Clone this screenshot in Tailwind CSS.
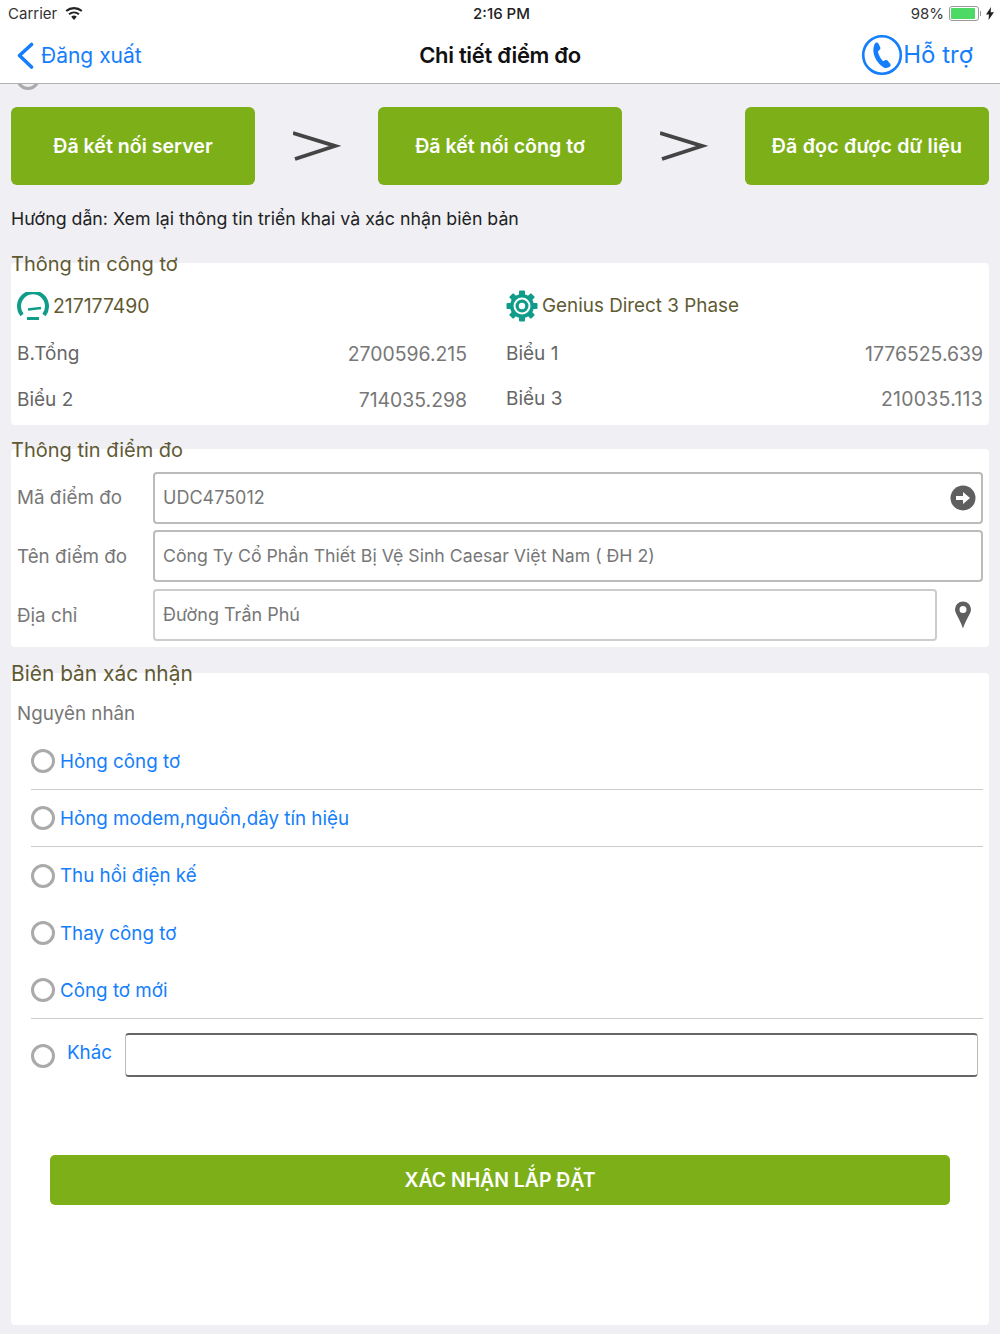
<!DOCTYPE html>
<html lang="vi"><head><meta charset="utf-8"><script src="https://cdn.jsdelivr.net/npm/@tailwindcss/browser@4"></script></head>
<body class="m-0">
<div class="relative w-[1000px] h-[1334px] overflow-hidden bg-[#efeff4] font-['Inter','Noto_Sans',sans-serif] text-[18px] leading-[24px]">
  <div class="absolute left-[16px] top-[66px] w-[24px] h-[24px] rounded-full border-[3px] border-[#aaaaaa]"></div>
  <header class="relative bg-white h-[84px] border-b border-[#b2b2b2]">
    <div class="h-[27px] flex items-center justify-between pl-[8px] pr-[6px] text-[15px] text-[#333]">
      <div class="flex items-center gap-[8px] w-[300px]"><span>Carrier</span>
        <svg width="18" height="13" viewBox="0 0 18 13" fill="#222"><path d="M9 13 6.200 9.700a4.300 4.300 0 0 1 5.600 0z"/><path d="M4.700 8A6.700 6.700 0 0 1 13.300 8l1.300-1.600A8.800 8.800 0 0 0 3.400 6.400z"/><path d="M1.900 4.800A11 11 0 0 1 16.100 4.800l1.400-1.600A13.200 13.200 0 0 0 .5 3.200z"/></svg>
      </div>
      <span class="font-medium text-[#222] ml-[1px]">2:16 PM</span>
      <div class="flex items-center justify-end gap-[5px] w-[300px]"><span>98%</span>
        <div class="flex items-center gap-[1px]"><div class="w-[30px] h-[15px] rounded-[3px] border border-[#999] p-[1px]"><div class="h-full w-[93%] rounded-[1px] bg-[#4cd964]"></div></div><div class="w-[1px] h-[5px] bg-[#999]"></div></div>
        <svg width="8" height="13" viewBox="0 0 8 13" fill="#222"><path d="M5 0 0 7.500h3L2.500 13 8 5.200H4.700z"/></svg>
      </div>
    </div>
    <nav class="h-[56px] flex items-center justify-between pl-[16px] pr-[27px]">
      <div class="flex items-center gap-[6px] w-[311px] text-[#147efb] text-[21px]">
        <svg width="19" height="27" viewBox="0 0 19 27" fill="none" stroke="#147efb" stroke-width="3.600" stroke-linecap="round" stroke-linejoin="round"><path d="M15.500 2.500 3.500 13.500 15.500 25"/></svg>
        <span class="mt-[2px]">Đăng xuất</span>
      </div>
      <div class="font-semibold text-[22px] text-[#111] tracking-[-0.3px]">Chi tiết điểm đo</div>
      <div class="flex items-center justify-end w-[300px] text-[#147efb] text-[24px]">
        <svg width="42" height="42" viewBox="0 0 42 42"><circle cx="21" cy="21" r="18.800" fill="none" stroke="#147efb" stroke-width="2.600"/><path fill="#147efb" d="M14.500 8.800c1-.7 2.300-.4 2.900.7l1.800 3.800c.4.900.2 1.800-.5 2.400l-1.400 1.200c-.3.300-.4.700-.3 1.100.7 3 2.300 6.200 4.700 8.700.3.300.7.400 1 .2l1.700-.8c.9-.4 1.800-.2 2.400.6l2.500 3.200c.6.900.5 2-.3 2.700-1.700 1.500-4.100 2-6.300.8-3.800-2-7-5.800-8.900-10.300-1.800-4.400-2-9.400-.2-13.200.2-.4.500-.7.900-1z"/></svg>
        <span>Hỗ trợ</span>
      </div>
    </nav>
  </header>

  <main class="px-[11px]">
    <section class="flex justify-between items-center pt-[23px]">
      <div class="w-[244px] h-[78px] rounded-[6px] bg-[#7daf19] flex items-center justify-center text-white font-semibold text-[19.600px]">Đã kết nối server</div>
      <svg width="48" height="36" viewBox="0 0 48 36" fill="none" stroke="#444" stroke-width="3.800"><path d="M0 5 42 18 2 31"/></svg>
      <div class="w-[244px] h-[78px] rounded-[6px] bg-[#7daf19] flex items-center justify-center text-white font-semibold text-[19.600px]">Đã kết nối công tơ</div>
      <svg width="48" height="36" viewBox="0 0 48 36" fill="none" stroke="#444" stroke-width="3.800"><path d="M0 5 42 18 2 31"/></svg>
      <div class="w-[244px] h-[78px] rounded-[6px] bg-[#7daf19] flex items-center justify-center text-white font-semibold text-[19.600px] tracking-[0.2px]">Đã đọc được dữ liệu</div>
    </section>

    <p class="mt-[22px] h-[24px] text-[#222] text-[17.750px]">Hướng dẫn: Xem lại thông tin triển khai và xác nhận biên bản</p>

    <section class="relative mt-[32px] h-[162px] rounded-[4px] bg-white text-[19.400px]">
      <h2 class="absolute -top-[11px] left-0 font-normal text-[20px] text-[#5f5a33]">Thông tin công tơ</h2>
      <div class="grid grid-cols-[450px_1fr] gap-x-[39px] pl-[6px] pr-[6px]">
        <div class="h-[37px] mt-[24px] flex items-center gap-[4px] text-[#5f5a33]">
          <svg width="32" height="28" viewBox="0 0 32 28" fill="none" stroke="#0f9d8a" stroke-width="4"><path d="M5 23A14 14 0 1 1 27 23"/><path d="M10 26.500h12" stroke-width="3"/><path d="M11 17.500l13-1.500" stroke-width="2.600"/></svg>
          <span>217177490</span>
        </div>
        <div class="h-[37px] mt-[24px] flex items-center gap-[4px] text-[#5f5a33] text-[18.850px]">
          <svg width="32" height="32" viewBox="0 0 32 32" fill="#0f9d8a"><g><rect x="13" y="0.500" width="6" height="31" rx="1"/><rect x="0.500" y="13" width="31" height="6" rx="1"/><rect x="13" y="0.500" width="6" height="31" rx="1" transform="rotate(45 16 16)"/><rect x="13" y="0.500" width="6" height="31" rx="1" transform="rotate(-45 16 16)"/></g><circle cx="16" cy="16" r="12"/><circle cx="16" cy="16" r="8.500" fill="#fff"/><circle cx="16" cy="16" r="6.500"/><circle cx="16" cy="16" r="3.200" fill="#fff"/></svg>
          <span>Genius Direct 3 Phase</span>
        </div>
        <div class="h-[46px] mt-[7px] flex items-center justify-between"><span class="text-[#666] text-[19px]">B.Tổng</span><span class="text-[#777]">2700596.215</span></div>
        <div class="h-[46px] mt-[7px] flex items-center justify-between"><span class="text-[#666] text-[19px]">Biểu 1</span><span class="text-[#777]">1776525.639</span></div>
        <div class="h-[46px] flex items-center justify-between"><span class="text-[#666] text-[19px]">Biểu 2</span><span class="text-[#777]">714035.298</span></div>
        <div class="h-[44px] flex items-center justify-between"><span class="text-[#666] text-[19px]">Biểu 3</span><span class="text-[#777] tracking-[0.3px]">210035.113</span></div>
      </div>
    </section>

    <section class="relative mt-[24px] h-[198px] rounded-[4px] bg-white pt-[23px] pl-[6px] pr-[6px] text-[18.800px]">
      <h2 class="absolute -top-[11px] left-0 font-normal text-[20px] text-[#5f5a33]">Thông tin điểm đo</h2>
      <div class="flex items-center h-[52px]"><span class="w-[136px] shrink-0 text-[#777]">Mã điểm đo</span>
        <div class="flex-1 h-full rounded-[4px] border-2 border-[#bbb] flex items-center justify-between pl-[8px] pr-[5px] text-[18px] text-[#777]"><span>UDC475012</span>
          <svg width="26" height="26" viewBox="0 0 26 26"><circle cx="13" cy="13" r="12.500" fill="#5f5f5f"/><path fill="#fff" d="M6 11h7V7l7 6-7 6v-4H6z"/></svg>
        </div>
      </div>
      <div class="flex items-center h-[52px] mt-[6px]"><span class="w-[136px] shrink-0 text-[#777] mt-[2px]">Tên điểm đo</span>
        <div class="flex-1 h-full rounded-[4px] border-2 border-[#bbb] flex items-center pl-[8px] text-[17.700px] text-[#777]">Công Ty Cổ Phần Thiết Bị Vệ Sinh Caesar Việt Nam ( ĐH 2)</div>
      </div>
      <div class="flex items-center h-[52px] mt-[7px]"><span class="w-[136px] shrink-0 text-[#777] mt-[2px]">Địa chỉ</span>
        <div class="w-[784px] shrink-0 h-full rounded-[4px] border-2 border-[#ccc] flex items-center pl-[8px] text-[18px] text-[#777]">Đường Trần Phú</div>
        <div class="flex-1 flex justify-center pl-[6px]"><svg width="18" height="28" viewBox="0 0 18 28"><path fill="#5f5f5f" fill-rule="evenodd" d="M9 0.500a8 8 0 0 1 8 8c0 4-4.800 9-8 19-3.200-10-8-15-8-19a8 8 0 0 1 8-8zM9 5a3.500 3.500 0 1 0 0 7 3.500 3.500 0 0 0 0-7z"/></svg></div>
      </div>
    </section>

    <section class="relative mt-[26px] h-[652px] rounded-[4px] bg-white pl-[6px] pr-[6px] text-[18.800px]">
      <h2 class="absolute -top-[11px] left-0 font-normal text-[20.900px] text-[#5f5a33]">Biên bản xác nhận</h2>
      <div class="pt-[29px] h-[60px] text-[#777]">Nguyên nhân</div>
      <div class="ml-[14px] h-[57px] flex items-center gap-[5px] text-[#147efb] border-b border-[#ccc]"><span class="w-[24px] h-[24px] rounded-full border-[3px] border-[#aaa]"></span><span class="mt-[2px]">Hỏng công tơ</span></div>
      <div class="ml-[14px] h-[57px] flex items-center gap-[5px] text-[#147efb] border-b border-[#ccc]"><span class="w-[24px] h-[24px] rounded-full border-[3px] border-[#aaa]"></span><span class="mt-[2px]">Hỏng modem,nguồn,dây tín hiệu</span></div>
      <div class="ml-[14px] h-[57px] flex items-center gap-[5px] text-[#147efb]"><span class="w-[24px] h-[24px] rounded-full border-[3px] border-[#aaa]"></span><span>Thu hồi điện kế</span></div>
      <div class="ml-[14px] h-[58px] flex items-center gap-[5px] text-[#147efb]"><span class="w-[24px] h-[24px] rounded-full border-[3px] border-[#aaa]"></span><span class="mt-[2px]">Thay công tơ</span></div>
      <div class="ml-[14px] h-[57px] flex items-center gap-[5px] text-[#147efb] border-b border-[#ccc]"><span class="w-[24px] h-[24px] rounded-full border-[3px] border-[#aaa]"></span><span class="mt-[2px]">Công tơ mới</span></div>
      <div class="ml-[14px] mt-[14px] h-[44px] flex items-center text-[#147efb]"><span class="w-[24px] h-[24px] rounded-full border-[3px] border-[#aaa] mt-[2px]"></span><span class="ml-[12px] w-[58px] -mt-[4px]">Khác</span><div class="w-[853px] h-full rounded-[4px] border border-[#bbb] border-t-2 border-b-2 border-t-[#666] border-b-[#666]"></div></div>
      <div class="mx-[33px] mt-[78px] h-[50px] rounded-[5px] bg-[#7daf19] flex items-center justify-center text-white font-semibold text-[19.400px]">XÁC NHẬN LẮP ĐẶT</div>
    </section>
  </main>
</div>
</body></html>
